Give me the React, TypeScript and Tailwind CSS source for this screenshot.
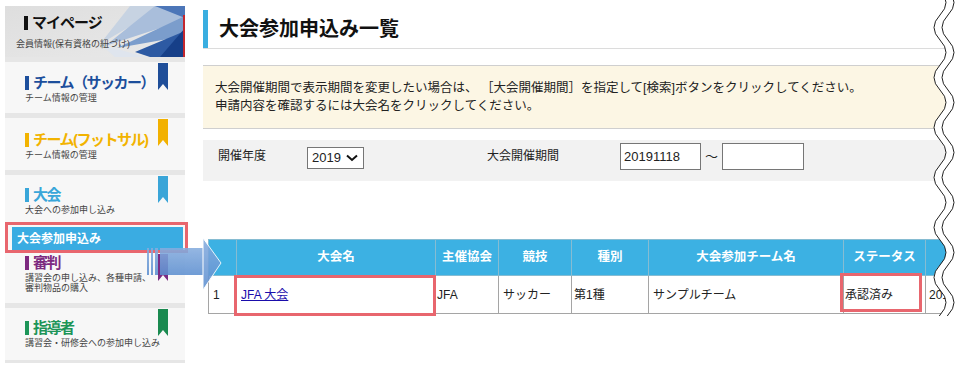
import React from 'react';

type NavProps = {
  title: string;
  sub: React.ReactNode;
  text: string;
  bar: string;
  ribbon?: string;
  box: string;
};

const Ribbon = ({ fill }: { fill: string }) => (
  <svg className="absolute left-[153px] top-[1px]" width="10" height="27" viewBox="0 0 10 27">
    <path d="M0 0H10V27L5 21L0 27Z" fill={fill} />
  </svg>
);

const NavItem = ({ title, sub, text, bar, ribbon, box }: NavProps) => (
  <div className={`relative bg-[#f7f7f7] pl-[20px] ${box}`}>
    <div className={`flex h-[14px] items-center text-[15px] font-bold leading-[14px] tracking-[-1.5px] ${text}`}>
      <span className={`mr-[4px] h-[14px] w-[4px] ${bar}`} />
      {title}
    </div>
    <div className="mt-[3px] text-[9px] leading-[10px] text-[#444]">{sub}</div>
    {ribbon && <Ribbon fill={ribbon} />}
  </div>
);

// wave edge on the right, drawn over the cut-off content
const wave = (x: number) => {
  let d = `M${x} -10 Q${x + 12} 2.5 ${x} 15`;
  for (let y = 40; y <= 340; y += 25) d += ` T${x} ${y}`;
  return d;
};

const MyPage = () => (
  <div className="relative h-[51px] overflow-hidden">
    <svg className="absolute inset-0" width="180" height="51" viewBox="0 0 180 51">
      <defs>
        <linearGradient id="mp" x1="0" y1="0" x2="1" y2="1">
          <stop offset="0" stopColor="#dedede" />
          <stop offset="1" stopColor="#e9e9e9" />
        </linearGradient>
      </defs>
      <rect width="180" height="51" fill="url(#mp)" />
      <polygon points="95,38 125,0 160,0" fill="#c7d3e2" />
      <polygon points="100,40 150,0 180,0 180,14" fill="#a9bedb" />
      <polygon points="112,42 180,10 180,30" fill="#7b9dcc" />
      <polygon points="95,38 140,51 110,51" fill="#dfe5ee" />
      <polygon points="130,46 180,25 180,51 145,51" fill="#2d5aa3" />
      <polygon points="155,51 180,22 180,51" fill="#163f88" />
      <polygon points="150,0 180,0 180,12" fill="#4c76b8" />
      <rect x="178" y="9" width="2" height="42" fill="#c3272e" />
    </svg>
    <div className="relative pl-[11px] pt-[10px]">
      <div className="ml-[8px] flex h-[14px] items-center text-[15px] font-bold leading-[14px] tracking-[-1px] text-[#111]">
        <span className="mr-[4px] h-[14px] w-[4px] bg-[#111]" />
        マイページ
      </div>
      <div className="mt-[9px] text-[9px] leading-[10px] text-[#444]">会員情報(保有資格の紐づけ)</div>
    </div>
  </div>
);

const Arrow = () => (
  <svg className="absolute left-[145px] top-[236px] opacity-[0.88]" width="80" height="56" viewBox="0 0 80 56">
    <defs>
      <linearGradient id="ar" x1="0" y1="0" x2="0" y2="1">
        <stop offset="0" stopColor="#86addf" />
        <stop offset="1" stopColor="#5d8fd0" />
      </linearGradient>
    </defs>
    <rect x="2" y="12" width="2" height="27" fill="url(#ar)" />
    <rect x="6" y="12" width="2" height="27" fill="url(#ar)" />
    <rect x="10" y="12" width="3" height="27" fill="url(#ar)" />
    <rect x="15" y="12" width="44" height="27" fill="url(#ar)" />
    <polygon points="58,2 76,27 58,54" fill="url(#ar)" stroke="#ffffff" strokeWidth="1" />
  </svg>
);

const cols = [28, 199, 63, 73, 77, 195, 82, 130];
const heads = ['', '大会名', '主催協会', '競技', '種別', '大会参加チーム名', 'ステータス', '大会開催期間'];

const App: React.FC = () => {
  return (
    <div className="relative flex h-[365px] w-[965px] overflow-hidden bg-white font-['Liberation_Sans','Noto_Sans_CJK_JP',sans-serif] text-[#222]">
      {/* Sidebar */}
      <aside className="ml-[5px] mt-[6px] flex w-[180px] shrink-0 flex-col gap-[5px] self-start bg-[#e6e6e6] pb-[3px]">
        <div className="bg-white">
          <MyPage />
        </div>
        <NavItem box="h-[51px] pt-[14px]" title="チーム（サッカー）" sub="チーム情報の管理" text="text-[#1d4f9c]" bar="bg-[#1d4f9c]" ribbon="#1f4e99" />
        <NavItem box="h-[52px] pt-[15px]" title="チーム(フットサル)" sub="チーム情報の管理" text="text-[#f2b300]" bar="bg-[#f2b300]" ribbon="#f2b100" />
        <div className="flex flex-col">
          <NavItem box="h-[47px] pt-[13px]" title="大会" sub="大会への参加申し込み" text="text-[#39a6d9]" bar="bg-[#39a6d9]" ribbon="#3aa5d8" />
          <div className="relative h-[31px] bg-[#f7f7f7] pb-[3px] pl-[7px] pr-[2px] pt-[5px]">
            <div className="flex h-full items-center bg-[#3aace2] pl-[5px] text-[12px] font-bold text-white">大会参加申込み</div>
            <div className="absolute -right-[3px] bottom-0 left-0 top-0 border-[3px] border-[#e8666e]" />
          </div>
          <NavItem
            box="h-[50px] pt-[3px]"
            title="審判"
            sub={<><div>講習会の申し込み、各種申請、</div><div>審判物品の購入</div></>}
            text="text-[#7d2a80]"
            bar="bg-[#7d2a80]"
            ribbon="#7b2b83"
          />
        </div>
        <NavItem box="h-[52px] pt-[13px]" title="指導者" sub="講習会・研修会への参加申し込み" text="text-[#1d9558]" bar="bg-[#1d9558]" ribbon="#1a8a50" />
      </aside>

      {/* Main */}
      <main className="min-w-0 flex-1 pl-[18px] pt-[10px]">
        <div className="flex h-[39px] border-b border-[#dcdcdc]">
          <div className="w-[5px] bg-[#3aaee0]" />
          <h1 className="pl-[11px] text-[20px] font-bold leading-[39px] text-[#111]">大会参加申込み一覧</h1>
        </div>

        <div className="mt-[16px] h-[64px] border-y border-[#cfcfcf] bg-[#fcf6e4] pl-[12px] pt-[13px] text-[12.5px] leading-[18px] text-[#222] whitespace-nowrap">
          <p>大会開催期間で表示期間を変更したい場合は、 ［大会開催期間］を指定して[検索]ボタンをクリックしてください。</p>
          <p>申請内容を確認するには大会名をクリックしてください。</p>
        </div>

        <div className="mt-[11px] flex h-[41px] items-start bg-[#f2f2f2] pl-[15px] pt-[3px] text-[12px] leading-[14px] whitespace-nowrap">
          <span className="mt-[6px] w-[89px]">開催年度</span>
          <div className="mt-[4px] flex h-[22px] w-[57px] items-center border border-[#767676] bg-white pl-[4px] text-[13px]">
            2019
            <svg className="ml-[5px]" width="12" height="8" viewBox="0 0 12 8">
              <path d="M1 1.5L6 6L11 1.5" fill="none" stroke="#111" strokeWidth="2" />
            </svg>
          </div>
          <span className="ml-[123px] mt-[6px] w-[133px]">大会開催期間</span>
          <input readOnly value="20191118" className="h-[27px] w-[81px] border border-[#767676] bg-white px-[3px] text-[13px] outline-none" />
          <span className="mx-[4px] mt-[7px] text-[13px]">～</span>
          <input readOnly value="" className="h-[27px] w-[82px] border border-[#767676] bg-white px-[3px] text-[13px] outline-none" />
        </div>

        <table className="ml-[5px] mt-[58px] w-[847px] table-fixed border-collapse text-[12px]">
          <colgroup>
            {cols.map((w, i) => (
              <col key={i} style={{ width: w }} />
            ))}
          </colgroup>
          <thead>
            <tr>
              {heads.map((h, i) => (
                <th key={i} className="h-[36px] border border-[#86bcd2] bg-[#3cb1e3] text-[12.5px] font-bold text-white whitespace-nowrap">
                  {h}
                </th>
              ))}
            </tr>
          </thead>
          <tbody>
            <tr>
              <td className="h-[38px] border border-[#a5a5a5] pl-[4px]">1</td>
              <td className="relative border border-[#a5a5a5] pl-[4px]">
                <a href="#" className="text-[#1a0dab] underline">JFA 大会</a>
                <div className="absolute -bottom-[3px] -left-[3px] -right-[1px] -top-[1px] border-[3px] border-[#e8666e]" />
              </td>
              <td className="border border-[#a5a5a5] pl-[1px]">JFA</td>
              <td className="border border-[#a5a5a5] pl-[4px] whitespace-nowrap">サッカー</td>
              <td className="border border-[#a5a5a5] pl-[2px]">第1種</td>
              <td className="border border-[#a5a5a5] pl-[4px] whitespace-nowrap">サンプルチーム</td>
              <td className="relative border border-[#a5a5a5] pl-[1px] whitespace-nowrap">
                承認済み
                <div className="absolute -left-[4px] -top-[3px] bottom-[1px] right-[3px] border-[3px] border-[#e8666e]" />
              </td>
              <td className="border border-[#a5a5a5] pl-[3px] whitespace-nowrap">2019/11/18</td>
            </tr>
          </tbody>
        </table>
      </main>

      <Arrow />

      {/* wavy cut edge */}
      <svg className="pointer-events-none absolute inset-0" width="965" height="365" viewBox="0 0 965 365">
        <defs>
          <clipPath id="cut">
            <rect x="0" y="0" width="965" height="316" />
          </clipPath>
        </defs>
        <g clipPath="url(#cut)">
          <path d={`${wave(940)} L965 340 L965 -10 Z`} fill="#ffffff" />
          <path d={wave(940)} fill="none" stroke="#222" strokeWidth="1" />
          <path d={wave(948)} fill="none" stroke="#222" strokeWidth="1" />
        </g>
      </svg>
    </div>
  );
};

export default App;
